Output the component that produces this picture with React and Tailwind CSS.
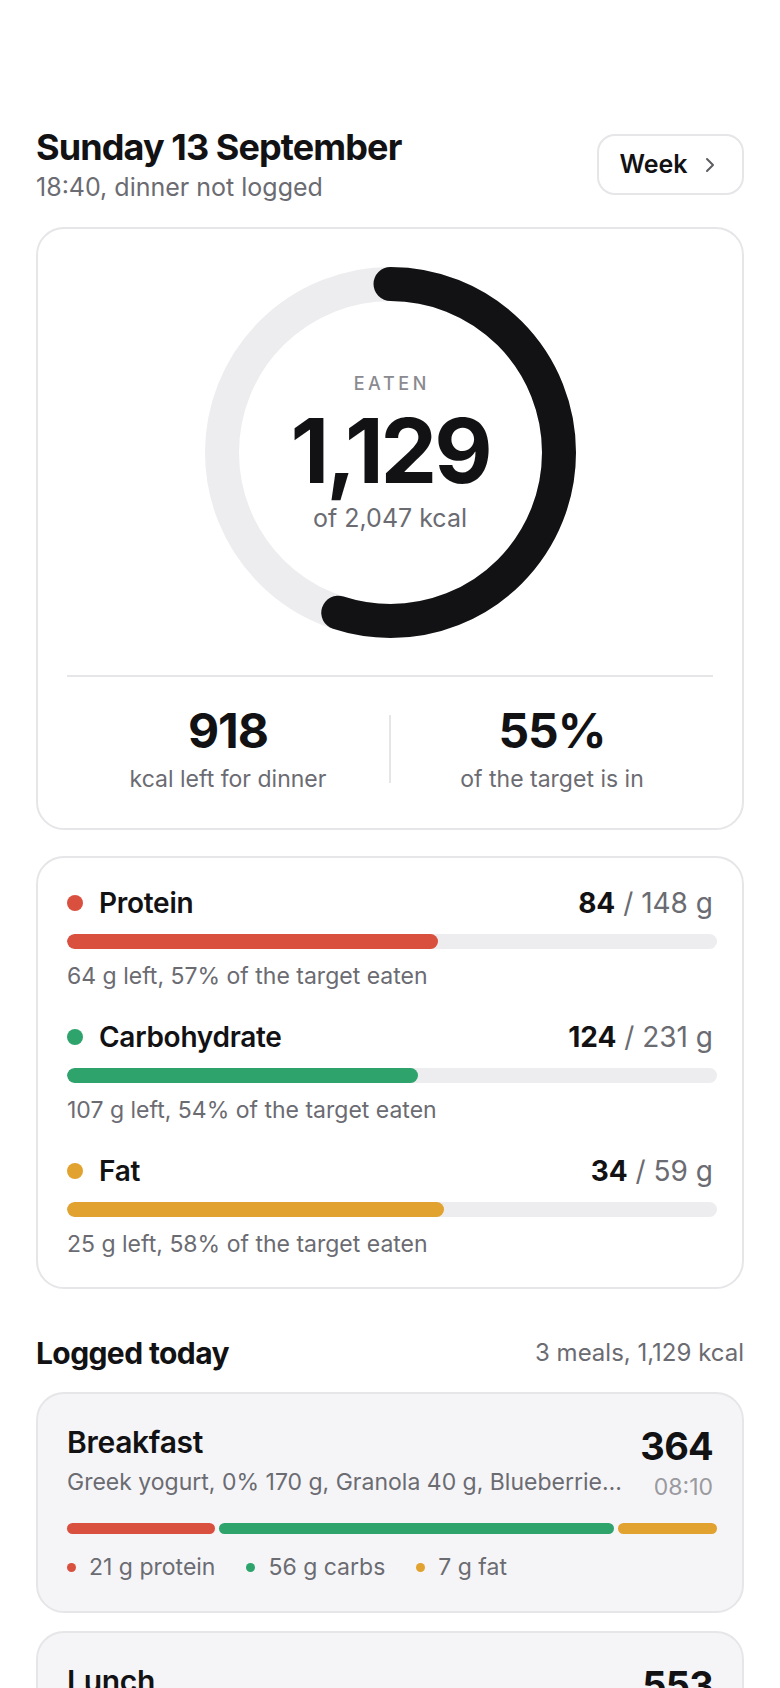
import { ChevronRight } from "lucide-react";

const macros = [
  { name: "Protein", dot: "bg-[#d9503e]", eaten: 84, target: 148, note: "64 g left, 57% of the target eaten" },
  { name: "Carbohydrate", dot: "bg-[#2ea36c]", eaten: 124, target: 231, note: "107 g left, 54% of the target eaten" },
  { name: "Fat", dot: "bg-[#e1a22f]", eaten: 34, target: 59, note: "25 g left, 58% of the target eaten" },
];

const meals = [
  { name: "Breakfast", kcal: 364, time: "08:10", items: "Greek yogurt, 0% 170 g, Granola 40 g, Blueberries 80 g, Honey 10 g", p: 21, c: 56, f: 7 },
  { name: "Lunch", kcal: 553, time: "12:45", items: "Chicken breast 150 g, Brown rice 180 g, Broccoli 120 g, Olive oil 10 g", p: 48, c: 52, f: 16 },
  { name: "Snack", kcal: 212, time: "15:30", items: "Apple 180 g, Almonds 20 g", p: 15, c: 16, f: 11 },
];

function Ring() {
  const r = 168.5;
  const circ = 2 * Math.PI * r;
  const done = circ * 0.55;
  return (
    <div className="relative w-[371px] h-[371px]">
      <svg width="371" height="371" viewBox="0 0 371 371" className="-rotate-90">
        <circle cx="185.5" cy="185.5" r={r} fill="none" stroke="#ededef" strokeWidth="34" />
        <circle
          cx="185.5"
          cy="185.5"
          r={r}
          fill="none"
          stroke="#121214"
          strokeWidth="34"
          strokeLinecap="round"
          strokeDasharray={`${done} ${circ}`}
        />
      </svg>
      <div className="absolute inset-0 flex flex-col items-center justify-center">
        <div className="text-[18px] leading-6 font-medium tracking-[0.2em] text-[#8a8a90] pl-[0.2em]">EATEN</div>
        <div className="mt-[11px] text-[90px] leading-[88px] font-bold tracking-[-0.035em] text-[#121214]">1,129</div>
        <div className="mt-[8px] text-[25px] leading-[30px] text-[#6b6b72]">of 2,047 kcal</div>
      </div>
    </div>
  );
}

function MacroRow({ m }) {
  const pct = Math.round((m.eaten / m.target) * 100);
  return (
    <div>
      <div className="flex items-center justify-between h-8">
        <div className="flex items-center gap-4">
          <span className={`w-[16px] h-[16px] rounded-full ${m.dot}`} />
          <span className="text-[28px] font-semibold text-[#121214] tracking-[-0.01em]">{m.name}</span>
        </div>
        <div className="text-[28px] text-[#6b6b72]">
          <span className="font-bold text-[#121214]">{m.eaten}</span> / {m.target} g
        </div>
      </div>
      <div className="mt-[15px] -mr-1 h-[15px] rounded-full bg-[#ededef] overflow-hidden">
        <div className={`h-full rounded-full ${m.dot}`} style={{ width: `${pct}%` }} />
      </div>
      <div className="mt-[13px] text-[23px] text-[#6b6b72] leading-7">{m.note}</div>
    </div>
  );
}

function MealCard({ meal }) {
  return (
    <div className="rounded-[28px] border-2 border-[#e6e6e9] bg-[#f5f5f7] px-[29px] pt-[31px] pb-[29px]">
      <div className="flex justify-between gap-4">
        <div className="min-w-0">
          <div className="text-[30px] font-semibold text-[#121214] leading-[34px] tracking-[-0.01em]">{meal.name}</div>
          <div className="mt-[8px] text-[23px] text-[#6b6b72] truncate leading-[30px]">{meal.items}</div>
        </div>
        <div className="flex flex-col items-end shrink-0">
          <div className="text-[38px] font-bold leading-[42px] text-[#121214] tracking-[-0.02em]">{meal.kcal}</div>
          <div className="mt-[5px] text-[23px] text-[#9a9aa0] leading-[30px]">{meal.time}</div>
        </div>
      </div>
      <div className="mt-[21px] -mr-1 flex gap-[4.5px] h-[11px]">
        <div className="h-full rounded-full bg-[#d9503e]" style={{ flexGrow: meal.p * 4 }} />
        <div className="h-full rounded-full bg-[#2ea36c]" style={{ flexGrow: meal.c * 4 }} />
        <div className="h-full rounded-full bg-[#e1a22f]" style={{ flexGrow: meal.f * 8 }} />
      </div>
      <div className="mt-[18px] flex items-center gap-[31px] text-[23px] text-[#6b6b72] leading-[30px]">
        <div className="flex items-center gap-[13px]">
          <span className="w-[9px] h-[9px] rounded-full bg-[#d9503e]" />
          {meal.p} g protein
        </div>
        <div className="flex items-center gap-[13px]">
          <span className="w-[9px] h-[9px] rounded-full bg-[#2ea36c]" />
          {meal.c} g carbs
        </div>
        <div className="flex items-center gap-[13px]">
          <span className="w-[9px] h-[9px] rounded-full bg-[#e1a22f]" />
          {meal.f} g fat
        </div>
      </div>
    </div>
  );
}

export default function App() {
  return (
    <div className="min-h-screen bg-white px-9 pt-[125px] pb-16 font-['Inter',sans-serif] text-[#121214]">
      {/* header */}
      <div className="flex items-start justify-between">
        <div>
          <h1 className="text-[36px] leading-[44px] font-bold tracking-[-0.025em]">Sunday 13 September</h1>
          <p className="text-[25px] leading-8 text-[#6b6b72] mt-[2px]">18:40, dinner not logged</p>
        </div>
        <button className="mt-[9px] h-[61px] w-[147px] flex items-center justify-center gap-[10px] rounded-[18px] border-2 border-[#e6e6e9] bg-white">
          <span className="text-[25px] font-semibold">Week</span>
          <ChevronRight size={24} strokeWidth={2} className="text-[#5c5c62]" />
        </button>
      </div>

      {/* calories card */}
      <div className="mt-[24px] rounded-[28px] border-2 border-[#e6e6e9] px-[29px] pt-[38px] pb-[34px]">
        <div className="flex justify-center">
          <Ring />
        </div>
        <div className="mt-[37px] h-[2px] bg-[#e6e6e9]" />
        <div className="mt-[26px] grid grid-cols-[1fr_2px_1fr] items-center">
          <div className="flex flex-col items-center">
            <div className="text-[48px] leading-[56px] font-bold tracking-[-0.02em]">918</div>
            <div className="text-[23px] leading-[30px] text-[#6b6b72] mt-[5px]">kcal left for dinner</div>
          </div>
          <div className="h-[68px] bg-[#e6e6e9]" />
          <div className="flex flex-col items-center">
            <div className="text-[48px] leading-[56px] font-bold tracking-[-0.02em]">55%</div>
            <div className="text-[23px] leading-[30px] text-[#6b6b72] mt-[5px]">of the target is in</div>
          </div>
        </div>
      </div>

      {/* macros card */}
      <div className="mt-[26px] rounded-[28px] border-2 border-[#e6e6e9] px-[29px] pt-[29px] pb-[29px] flex flex-col gap-[31px]">
        {macros.map((m) => (
          <MacroRow key={m.name} m={m} />
        ))}
      </div>

      {/* logged today */}
      <div className="mt-[46px] flex items-center justify-between h-9">
        <h2 className="text-[30px] font-bold tracking-[-0.02em]">Logged today</h2>
        <span className="text-[24px] text-[#6b6b72]">3 meals, 1,129 kcal</span>
      </div>
      <div className="mt-[21px] flex flex-col gap-[18px]">
        {meals.map((meal) => (
          <MealCard key={meal.name} meal={meal} />
        ))}
      </div>
    </div>
  );
}
